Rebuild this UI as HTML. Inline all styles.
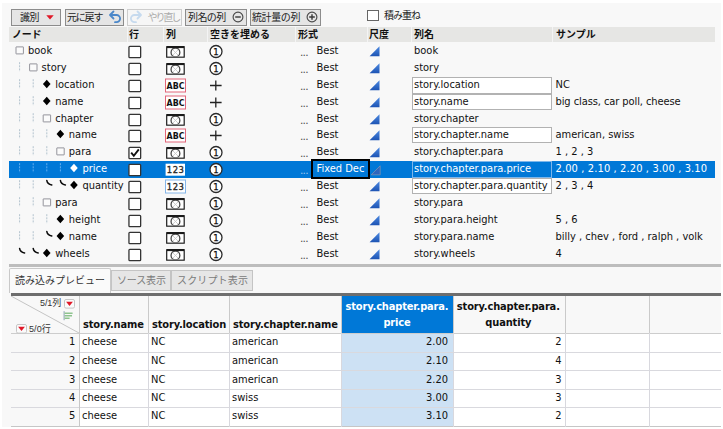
<!DOCTYPE html>
<html lang="ja"><head><meta charset="utf-8"><title>XML import</title>
<style>
html,body{margin:0;padding:0;background:#fff;}
body{width:723px;height:429px;position:relative;overflow:hidden;font-family:'DejaVu Sans Condensed','Liberation Sans','Noto Sans CJK JP',sans-serif;font-size:11px;color:#111;}
#panel{position:absolute;left:2px;top:3px;width:719px;height:424px;background:#f8f8f8;}
.abs{position:absolute;}
.btn{position:absolute;top:9px;height:15px;border:1px solid #8c8c8c;background:#e5e5e5;box-sizing:content-box;}
.jt{position:absolute;font-family:'Liberation Sans','Noto Sans CJK JP',sans-serif;font-size:10px;line-height:15px;white-space:nowrap;color:#222;}
.hd{position:absolute;top:27px;height:15px;line-height:15px;font-family:'Liberation Sans','Noto Sans CJK JP',sans-serif;font-weight:bold;font-size:10px;white-space:nowrap;color:#111;}
.row{position:absolute;left:9px;width:706px;height:17px;}
.t{position:absolute;top:0;height:15px;line-height:15px;white-space:nowrap;}
.gd{position:absolute;top:3px;height:11px;width:0;border-left:1px dotted #a9b4bb;}
.bx{position:absolute;top:4px;width:6px;height:6px;border:1px solid #8a8a8a;border-radius:1px;background:#fbfbfb;}
.dm{position:absolute;top:3px;width:8px;height:9px;}
.cb{position:absolute;left:128px;top:3.5px;width:10.4px;height:9.9px;border:1.3px solid #3a3a3a;background:#fff;border-radius:1.5px;}
.inp{position:absolute;left:412px;top:0px;width:140px;height:16px;border:1px solid #b2b2b2;background:#fff;box-sizing:border-box;}
.sel{background:#0078d7;color:#fff;}
.ico{position:absolute;}
.tab{position:absolute;box-sizing:border-box;}
.vl{position:absolute;width:1px;background:#cfcfcf;}
.hl{position:absolute;height:1px;background:#d9d9de;}
.c{position:absolute;height:18px;line-height:18px;white-space:nowrap;}
.th{position:absolute;font-weight:bold;white-space:nowrap;line-height:16px;letter-spacing:-0.15px;}
</style></head><body>
<svg width="0" height="0" style="position:absolute;left:0;top:0"><defs><clipPath id="vc"><rect x="1.3" y="2.1" width="16.3" height="8.5"/></clipPath><linearGradient id="tg" x1="0" y1="0" x2="0" y2="1"><stop offset="0" stop-color="#4d8ae2"/><stop offset="1" stop-color="#1d54b4"/></linearGradient></defs></svg>
<div id="panel"></div>

<div class="btn" style="left:11px;width:48px;"></div>
<div class="jt" style="left:20px;top:10px;letter-spacing:-0.5px;">識別</div>
<svg class="abs" style="left:46px;top:15px" width="8" height="5" viewBox="0 0 8 5"><path d="M0.3 0.3h7.4L4 4.4z" fill="#e01828"/></svg>
<div class="btn" style="left:65px;width:57px;"></div>
<div class="jt" style="left:67px;top:10px;letter-spacing:-1.2px;">元に戻す</div>
<svg class="abs" style="left:108px;top:10px" width="15" height="14" viewBox="0 0 15 14"><path d="M5.5 1.5L2 5l3.5 3.5M2.2 5h6.3a3.6 3.6 0 0 1 0 7.2H7" fill="none" stroke="#4a87c9" stroke-width="1.8" stroke-linecap="round" stroke-linejoin="round"/></svg>
<div class="btn" style="left:127px;width:53px;border-color:#cdcdcd;background:#f6f6f6;"></div>
<svg class="abs" style="left:128px;top:10px" width="15" height="14" viewBox="0 0 15 14"><path d="M9.5 1.5L13 5 9.5 8.5M12.8 5H6.5a3.6 3.6 0 0 0 0 7.2H8" fill="none" stroke="#c6daee" stroke-width="1.8" stroke-linecap="round" stroke-linejoin="round"/></svg>
<div class="jt" style="left:147.6px;top:10px;letter-spacing:-2.1px;color:#ababab;">やり直し</div>
<div class="btn" style="left:185px;width:60px;"></div>
<div class="jt" style="left:188px;top:10px;letter-spacing:-0.6px;">列名の列</div>
<svg class="abs" style="left:232px;top:11px" width="12" height="12" viewBox="0 0 12 12"><circle cx="6" cy="6" r="4.9" fill="none" stroke="#4a4a4a" stroke-width="1.15"/><path d="M3.2 6h5.6" stroke="#3a3a3a" stroke-width="1.4"/></svg>
<div class="btn" style="left:250px;width:69px;"></div>
<div class="jt" style="left:252px;top:10px;letter-spacing:-0.4px;">統計量の列</div>
<svg class="abs" style="left:306px;top:11px" width="12" height="12" viewBox="0 0 12 12"><circle cx="6" cy="6" r="4.9" fill="none" stroke="#4a4a4a" stroke-width="1.15"/><path d="M3.2 6h5.6M6 3.2v5.6" stroke="#3a3a3a" stroke-width="1.4"/></svg>
<div class="abs" style="left:367px;top:10px;width:10px;height:9px;border:1px solid #666;background:#fff;"></div>
<div class="jt" style="left:384px;top:8px;letter-spacing:-1px;">積み重ね</div>
<div class="abs" style="left:9px;top:27px;width:706px;height:15px;background:#e6e6e4;"></div>
<div class="abs" style="left:127px;top:27px;width:1px;height:15px;background:#f4f4f4;"></div>
<div class="abs" style="left:163px;top:27px;width:1px;height:15px;background:#f4f4f4;"></div>
<div class="abs" style="left:207px;top:27px;width:1px;height:15px;background:#f4f4f4;"></div>
<div class="abs" style="left:295px;top:27px;width:1px;height:15px;background:#f4f4f4;"></div>
<div class="abs" style="left:367px;top:27px;width:1px;height:15px;background:#f4f4f4;"></div>
<div class="abs" style="left:411px;top:27px;width:1px;height:15px;background:#f4f4f4;"></div>
<div class="abs" style="left:552px;top:27px;width:1px;height:15px;background:#f4f4f4;"></div>
<div class="hd" style="left:12px;letter-spacing:-0.2px;">ノード</div>
<div class="hd" style="left:129px;letter-spacing:0.0px;">行</div>
<div class="hd" style="left:166px;letter-spacing:0.0px;">列</div>
<div class="hd" style="left:210px;letter-spacing:0.0px;">空きを埋める</div>
<div class="hd" style="left:298px;letter-spacing:0.0px;">形式</div>
<div class="hd" style="left:369px;letter-spacing:0.0px;">尺度</div>
<div class="hd" style="left:414px;letter-spacing:0.0px;">列名</div>
<div class="hd" style="left:556px;letter-spacing:0.0px;">サンプル</div>
<div class="row" style="top:43px;">
<svg class="ico" style="left:0;top:0" width="100" height="17" viewBox="0 0 100 17"><rect x="7.00" y="3.9" width="7.4" height="7" rx="0.2" fill="#fbfbfb" stroke="#94949c" stroke-width="1"/></svg>
<div class="t" style="left:19.0px;">book</div>
<svg class="ico" style="left:119px;top:2px" width="15" height="14" viewBox="0 0 15 14"><rect x="0.95" y="1.4" width="11.7" height="11.2" rx="0.9" fill="#fff" stroke="#333" stroke-width="1.3"/></svg>
<svg class="ico" style="left:157px;top:3px" width="19" height="12" viewBox="0 0 19 12"><rect x="0.1" y="0" width="18.7" height="11.8" rx="0.4" fill="#1a1a1a"/><rect x="1.3" y="2.1" width="16.3" height="8.5" fill="#fff"/><g clip-path="url(#vc)"><circle cx="9.45" cy="6.4" r="4.4" fill="none" stroke="#484848" stroke-width="1.3"/><path d="M6.9 3.9l5.1 5.1M12 3.9l-5.1 5.1" stroke="#c4c4c4" stroke-width="0.8"/></g></svg>
<svg class="ico" style="left:200px;top:1px" width="14" height="15" viewBox="0 0 14 15"><circle cx="7" cy="7.5" r="6.0" fill="#fff" stroke="#2a2a2a" stroke-width="1.3"/><text x="7" y="10.9" text-anchor="middle" font-family="'DejaVu Sans Condensed','Liberation Sans',sans-serif" font-size="9.5" fill="#111" stroke="#111" stroke-width="0.25">1</text></svg>
<div class="t" style="left:291.4px;top:4px;font-size:7px;font-weight:bold;letter-spacing:0.25px;color:#505050;">...</div>
<div class="t" style="left:307.5px;">Best</div>
<svg class="ico" style="left:360px;top:3px" width="11" height="11" viewBox="0 0 11 11"><path d="M10.5 0.3V10.2H0.6z" fill="url(#tg)"/></svg>
<div class="t" style="left:405px;">book</div>
</div>
<div class="row" style="top:60px;">
<svg class="ico" style="left:0;top:0" width="100" height="17" viewBox="0 0 100 17"><path d="M10.60 2.2V11.6" stroke="#b3c3ce" stroke-width="1" stroke-dasharray="2 1.1" fill="none"/><rect x="20.60" y="3.9" width="7.4" height="7" rx="0.2" fill="#fbfbfb" stroke="#94949c" stroke-width="1"/></svg>
<div class="t" style="left:32.6px;">story</div>
<svg class="ico" style="left:119px;top:2px" width="15" height="14" viewBox="0 0 15 14"><rect x="0.95" y="1.4" width="11.7" height="11.2" rx="0.9" fill="#fff" stroke="#333" stroke-width="1.3"/></svg>
<svg class="ico" style="left:157px;top:3px" width="19" height="12" viewBox="0 0 19 12"><rect x="0.1" y="0" width="18.7" height="11.8" rx="0.4" fill="#1a1a1a"/><rect x="1.3" y="2.1" width="16.3" height="8.5" fill="#fff"/><g clip-path="url(#vc)"><circle cx="9.45" cy="6.4" r="4.4" fill="none" stroke="#484848" stroke-width="1.3"/><path d="M6.9 3.9l5.1 5.1M12 3.9l-5.1 5.1" stroke="#c4c4c4" stroke-width="0.8"/></g></svg>
<svg class="ico" style="left:200px;top:1px" width="14" height="15" viewBox="0 0 14 15"><circle cx="7" cy="7.5" r="6.0" fill="#fff" stroke="#2a2a2a" stroke-width="1.3"/><text x="7" y="10.9" text-anchor="middle" font-family="'DejaVu Sans Condensed','Liberation Sans',sans-serif" font-size="9.5" fill="#111" stroke="#111" stroke-width="0.25">1</text></svg>
<div class="t" style="left:291.4px;top:4px;font-size:7px;font-weight:bold;letter-spacing:0.25px;color:#505050;">...</div>
<div class="t" style="left:307.5px;">Best</div>
<svg class="ico" style="left:360px;top:3px" width="11" height="11" viewBox="0 0 11 11"><path d="M10.5 0.3V10.2H0.6z" fill="url(#tg)"/></svg>
<div class="t" style="left:405px;">story</div>
</div>
<div class="row" style="top:77px;">
<svg class="ico" style="left:0;top:0" width="100" height="17" viewBox="0 0 100 17"><path d="M10.60 2.2V11.6" stroke="#b3c3ce" stroke-width="1" stroke-dasharray="2 1.1" fill="none"/><path d="M24.20 2.2V11.6" stroke="#b3c3ce" stroke-width="1" stroke-dasharray="2 1.1" fill="none"/><path d="M37.75 2.7L41.55 7 37.75 11.3 33.95 7z" fill="#000"/></svg>
<div class="t" style="left:46.2px;">location</div>
<svg class="ico" style="left:119px;top:2px" width="15" height="14" viewBox="0 0 15 14"><rect x="0.95" y="1.4" width="11.7" height="11.2" rx="0.9" fill="#fff" stroke="#333" stroke-width="1.3"/></svg>
<svg class="ico" style="left:156px;top:1px" width="21" height="15" viewBox="0 0 21 15"><rect x="0.5" y="1" width="20" height="13" fill="#fff" stroke="#e2667a" stroke-width="1"/><text x="10.5" y="11.1" text-anchor="middle" font-family="'DejaVu Sans Condensed','Liberation Sans',sans-serif" font-weight="bold" font-size="8.8" fill="#111">ABC</text></svg>
<svg class="ico" style="left:201px;top:3px" width="12" height="11" viewBox="0 0 12 11"><path d="M0 5.5h11.6M5.8 0.4v10.2" stroke="#222" stroke-width="1.3" fill="none"/></svg>
<div class="t" style="left:291.4px;top:4px;font-size:7px;font-weight:bold;letter-spacing:0.25px;color:#505050;">...</div>
<div class="t" style="left:307.5px;">Best</div>
<svg class="ico" style="left:360px;top:3px" width="11" height="11" viewBox="0 0 11 11"><path d="M10.5 0.3V10.2H0.6z" fill="url(#tg)"/></svg>
<div class="inp" style="left:403px;height:17px;"></div>
<div class="t" style="left:405px;">story.location</div>
<div class="t" style="left:546.5px;">NC</div>
</div>
<div class="row" style="top:94px;">
<svg class="ico" style="left:0;top:0" width="100" height="17" viewBox="0 0 100 17"><path d="M10.60 2.2V11.6" stroke="#b3c3ce" stroke-width="1" stroke-dasharray="2 1.1" fill="none"/><path d="M24.20 2.2V11.6" stroke="#b3c3ce" stroke-width="1" stroke-dasharray="2 1.1" fill="none"/><path d="M37.75 2.7L41.55 7 37.75 11.3 33.95 7z" fill="#000"/></svg>
<div class="t" style="left:46.2px;">name</div>
<svg class="ico" style="left:119px;top:2px" width="15" height="14" viewBox="0 0 15 14"><rect x="0.95" y="1.4" width="11.7" height="11.2" rx="0.9" fill="#fff" stroke="#333" stroke-width="1.3"/></svg>
<svg class="ico" style="left:156px;top:1px" width="21" height="15" viewBox="0 0 21 15"><rect x="0.5" y="1" width="20" height="13" fill="#fff" stroke="#e2667a" stroke-width="1"/><text x="10.5" y="11.1" text-anchor="middle" font-family="'DejaVu Sans Condensed','Liberation Sans',sans-serif" font-weight="bold" font-size="8.8" fill="#111">ABC</text></svg>
<svg class="ico" style="left:201px;top:3px" width="12" height="11" viewBox="0 0 12 11"><path d="M0 5.5h11.6M5.8 0.4v10.2" stroke="#222" stroke-width="1.3" fill="none"/></svg>
<div class="t" style="left:291.4px;top:4px;font-size:7px;font-weight:bold;letter-spacing:0.25px;color:#505050;">...</div>
<div class="t" style="left:307.5px;">Best</div>
<svg class="ico" style="left:360px;top:3px" width="11" height="11" viewBox="0 0 11 11"><path d="M10.5 0.3V10.2H0.6z" fill="url(#tg)"/></svg>
<div class="inp" style="left:403px;height:16px;"></div>
<div class="t" style="left:405px;">story.name</div>
<div class="t" style="left:546.5px;letter-spacing:-0.08px;">big class, car poll, cheese</div>
</div>
<div class="row" style="top:111px;">
<svg class="ico" style="left:0;top:0" width="100" height="17" viewBox="0 0 100 17"><path d="M10.60 2.2V11.6" stroke="#b3c3ce" stroke-width="1" stroke-dasharray="2 1.1" fill="none"/><path d="M24.20 2.2V11.6" stroke="#b3c3ce" stroke-width="1" stroke-dasharray="2 1.1" fill="none"/><rect x="34.20" y="3.9" width="7.4" height="7" rx="0.2" fill="#fbfbfb" stroke="#94949c" stroke-width="1"/></svg>
<div class="t" style="left:46.2px;">chapter</div>
<svg class="ico" style="left:119px;top:2px" width="15" height="14" viewBox="0 0 15 14"><rect x="0.95" y="1.4" width="11.7" height="11.2" rx="0.9" fill="#fff" stroke="#333" stroke-width="1.3"/></svg>
<svg class="ico" style="left:157px;top:3px" width="19" height="12" viewBox="0 0 19 12"><rect x="0.1" y="0" width="18.7" height="11.8" rx="0.4" fill="#1a1a1a"/><rect x="1.3" y="2.1" width="16.3" height="8.5" fill="#fff"/><g clip-path="url(#vc)"><circle cx="9.45" cy="6.4" r="4.4" fill="none" stroke="#484848" stroke-width="1.3"/><path d="M6.9 3.9l5.1 5.1M12 3.9l-5.1 5.1" stroke="#c4c4c4" stroke-width="0.8"/></g></svg>
<svg class="ico" style="left:200px;top:1px" width="14" height="15" viewBox="0 0 14 15"><circle cx="7" cy="7.5" r="6.0" fill="#fff" stroke="#2a2a2a" stroke-width="1.3"/><text x="7" y="10.9" text-anchor="middle" font-family="'DejaVu Sans Condensed','Liberation Sans',sans-serif" font-size="9.5" fill="#111" stroke="#111" stroke-width="0.25">1</text></svg>
<div class="t" style="left:291.4px;top:4px;font-size:7px;font-weight:bold;letter-spacing:0.25px;color:#505050;">...</div>
<div class="t" style="left:307.5px;">Best</div>
<svg class="ico" style="left:360px;top:3px" width="11" height="11" viewBox="0 0 11 11"><path d="M10.5 0.3V10.2H0.6z" fill="url(#tg)"/></svg>
<div class="t" style="left:405px;">story.chapter</div>
</div>
<div class="row" style="top:127px;">
<svg class="ico" style="left:0;top:0" width="100" height="17" viewBox="0 0 100 17"><path d="M10.60 2.2V11.6" stroke="#b3c3ce" stroke-width="1" stroke-dasharray="2 1.1" fill="none"/><path d="M24.20 2.2V11.6" stroke="#b3c3ce" stroke-width="1" stroke-dasharray="2 1.1" fill="none"/><path d="M37.80 2.2V11.6" stroke="#b3c3ce" stroke-width="1" stroke-dasharray="2 1.1" fill="none"/><path d="M51.35 2.7L55.15 7 51.35 11.3 47.55 7z" fill="#000"/></svg>
<div class="t" style="left:59.8px;">name</div>
<svg class="ico" style="left:119px;top:2px" width="15" height="14" viewBox="0 0 15 14"><rect x="0.95" y="1.4" width="11.7" height="11.2" rx="0.9" fill="#fff" stroke="#333" stroke-width="1.3"/></svg>
<svg class="ico" style="left:156px;top:1px" width="21" height="15" viewBox="0 0 21 15"><rect x="0.5" y="1" width="20" height="13" fill="#fff" stroke="#e2667a" stroke-width="1"/><text x="10.5" y="11.1" text-anchor="middle" font-family="'DejaVu Sans Condensed','Liberation Sans',sans-serif" font-weight="bold" font-size="8.8" fill="#111">ABC</text></svg>
<svg class="ico" style="left:201px;top:3px" width="12" height="11" viewBox="0 0 12 11"><path d="M0 5.5h11.6M5.8 0.4v10.2" stroke="#222" stroke-width="1.3" fill="none"/></svg>
<div class="t" style="left:291.4px;top:4px;font-size:7px;font-weight:bold;letter-spacing:0.25px;color:#505050;">...</div>
<div class="t" style="left:307.5px;">Best</div>
<svg class="ico" style="left:360px;top:3px" width="11" height="11" viewBox="0 0 11 11"><path d="M10.5 0.3V10.2H0.6z" fill="url(#tg)"/></svg>
<div class="inp" style="left:403px;height:16px;"></div>
<div class="t" style="left:405px;">story.chapter.name</div>
<div class="t" style="left:546.5px;">american, swiss</div>
</div>
<div class="row" style="top:144px;">
<svg class="ico" style="left:0;top:0" width="100" height="17" viewBox="0 0 100 17"><path d="M10.60 2.2V11.6" stroke="#b3c3ce" stroke-width="1" stroke-dasharray="2 1.1" fill="none"/><path d="M24.20 2.2V11.6" stroke="#b3c3ce" stroke-width="1" stroke-dasharray="2 1.1" fill="none"/><path d="M37.80 2.2V11.6" stroke="#b3c3ce" stroke-width="1" stroke-dasharray="2 1.1" fill="none"/><rect x="47.80" y="3.9" width="7.4" height="7" rx="0.2" fill="#fbfbfb" stroke="#94949c" stroke-width="1"/></svg>
<div class="t" style="left:59.8px;">para</div>
<svg class="ico" style="left:119px;top:2px" width="15" height="14" viewBox="0 0 15 14"><rect x="0.95" y="1.4" width="11.7" height="11.2" rx="0.9" fill="#fff" stroke="#333" stroke-width="1.3"/><path d="M3.2 6.6l2.6 3.2L10.8 3.4" fill="none" stroke="#111" stroke-width="1.9"/></svg>
<svg class="ico" style="left:157px;top:3px" width="19" height="12" viewBox="0 0 19 12"><rect x="0.1" y="0" width="18.7" height="11.8" rx="0.4" fill="#1a1a1a"/><rect x="1.3" y="2.1" width="16.3" height="8.5" fill="#fff"/><g clip-path="url(#vc)"><circle cx="9.45" cy="6.4" r="4.4" fill="none" stroke="#484848" stroke-width="1.3"/><path d="M6.9 3.9l5.1 5.1M12 3.9l-5.1 5.1" stroke="#c4c4c4" stroke-width="0.8"/></g></svg>
<svg class="ico" style="left:200px;top:1px" width="14" height="15" viewBox="0 0 14 15"><circle cx="7" cy="7.5" r="6.0" fill="#fff" stroke="#2a2a2a" stroke-width="1.3"/><text x="7" y="10.9" text-anchor="middle" font-family="'DejaVu Sans Condensed','Liberation Sans',sans-serif" font-size="9.5" fill="#111" stroke="#111" stroke-width="0.25">1</text></svg>
<div class="t" style="left:291.4px;top:4px;font-size:7px;font-weight:bold;letter-spacing:0.25px;color:#505050;">...</div>
<div class="t" style="left:307.5px;">Best</div>
<svg class="ico" style="left:360px;top:3px" width="11" height="11" viewBox="0 0 11 11"><path d="M10.5 0.3V10.2H0.6z" fill="url(#tg)"/></svg>
<div class="t" style="left:405px;">story.chapter.para</div>
<div class="t" style="left:546.5px;">1 , 2 , 3</div>
</div>
<div class="row sel" style="top:161px;">
<svg class="ico" style="left:0;top:0" width="100" height="17" viewBox="0 0 100 17"><path d="M10.60 2.2V11.6" stroke="#63aef0" stroke-width="1" stroke-dasharray="2 1.1" fill="none"/><path d="M24.20 2.2V11.6" stroke="#63aef0" stroke-width="1" stroke-dasharray="2 1.1" fill="none"/><path d="M37.80 2.2V11.6" stroke="#63aef0" stroke-width="1" stroke-dasharray="2 1.1" fill="none"/><path d="M51.40 2.2V11.6" stroke="#63aef0" stroke-width="1" stroke-dasharray="2 1.1" fill="none"/><path d="M64.95 2.7L68.75 7 64.95 11.3 61.15 7z" fill="#fff"/></svg>
<div class="t" style="left:73.4px;">price</div>
<svg class="ico" style="left:119px;top:2px" width="15" height="14" viewBox="0 0 15 14"><rect x="0.95" y="1.4" width="11.7" height="11.2" rx="0.9" fill="#fff" stroke="#333" stroke-width="1.3"/></svg>
<svg class="ico" style="left:156px;top:1px" width="21" height="15" viewBox="0 0 21 15"><rect x="0.6" y="1.7" width="19.4" height="12" fill="#fff"/><text x="10.6" y="11.3" text-anchor="middle" font-family="'DejaVu Sans Condensed','Liberation Sans',sans-serif" font-size="9.4" letter-spacing="0.5" fill="#2a2a2a" stroke="#2a2a2a" stroke-width="0.35">123</text></svg>
<svg class="ico" style="left:200px;top:1px" width="14" height="15" viewBox="0 0 14 15"><circle cx="7" cy="7.5" r="6.0" fill="#fff" stroke="#2a2a2a" stroke-width="1.3"/><text x="7" y="10.9" text-anchor="middle" font-family="'DejaVu Sans Condensed','Liberation Sans',sans-serif" font-size="9.5" fill="#111" stroke="#111" stroke-width="0.25">1</text></svg>
<div class="t" style="left:291.4px;top:4px;font-size:7px;font-weight:bold;letter-spacing:0.25px;color:#9cc4ee;">...</div>
<div class="t" style="left:307.5px;">Fixed Dec</div>
<svg class="ico" style="left:361px;top:3px" width="11" height="12" viewBox="0 0 11 12"><path d="M10.2 1.8V10.8H1.2z" fill="#2f66bd" stroke="#8797ad" stroke-width="0.7"/></svg>
<div class="inp" style="left:403px;height:17px;background:transparent;border-color:#7db6ea;"></div>
<div class="t" style="left:405px;">story.chapter.para.price</div>
<div class="t" style="left:546.5px;letter-spacing:0.12px;">2.00 , 2.10 , 2.20 , 3.00 , 3.10</div>
</div>
<div class="row" style="top:178px;">
<svg class="ico" style="left:0;top:0" width="100" height="17" viewBox="0 0 100 17"><path d="M10.60 2.2V11.6" stroke="#b3c3ce" stroke-width="1" stroke-dasharray="2 1.1" fill="none"/><path d="M24.20 2.2V11.6" stroke="#b3c3ce" stroke-width="1" stroke-dasharray="2 1.1" fill="none"/><path d="M37.80 2.4Q38.30 6.2 42.80 6.9" fill="none" stroke="#0a0a0a" stroke-width="1.5" stroke-linecap="round"/><path d="M51.40 2.4Q51.90 6.2 56.40 6.9" fill="none" stroke="#0a0a0a" stroke-width="1.5" stroke-linecap="round"/><path d="M64.95 2.7L68.75 7 64.95 11.3 61.15 7z" fill="#000"/></svg>
<div class="t" style="left:73.4px;">quantity</div>
<svg class="ico" style="left:119px;top:2px" width="15" height="14" viewBox="0 0 15 14"><rect x="0.95" y="1.4" width="11.7" height="11.2" rx="0.9" fill="#fff" stroke="#333" stroke-width="1.3"/></svg>
<svg class="ico" style="left:156px;top:1px" width="21" height="15" viewBox="0 0 21 15"><rect x="0.5" y="1" width="20" height="13" fill="#fff" stroke="#86b6e8" stroke-width="1"/><text x="10.6" y="11.3" text-anchor="middle" font-family="'DejaVu Sans Condensed','Liberation Sans',sans-serif" font-size="9.4" letter-spacing="0.5" fill="#2a2a2a" stroke="#2a2a2a" stroke-width="0.35">123</text></svg>
<svg class="ico" style="left:200px;top:1px" width="14" height="15" viewBox="0 0 14 15"><circle cx="7" cy="7.5" r="6.0" fill="#fff" stroke="#2a2a2a" stroke-width="1.3"/><text x="7" y="10.9" text-anchor="middle" font-family="'DejaVu Sans Condensed','Liberation Sans',sans-serif" font-size="9.5" fill="#111" stroke="#111" stroke-width="0.25">1</text></svg>
<div class="t" style="left:291.4px;top:4px;font-size:7px;font-weight:bold;letter-spacing:0.25px;color:#505050;">...</div>
<div class="t" style="left:307.5px;">Best</div>
<svg class="ico" style="left:360px;top:3px" width="11" height="11" viewBox="0 0 11 11"><path d="M10.5 0.3V10.2H0.6z" fill="url(#tg)"/></svg>
<div class="inp" style="left:403px;height:16px;"></div>
<div class="t" style="left:405px;">story.chapter.para.quantity</div>
<div class="t" style="left:546.5px;">2 , 3 , 4</div>
</div>
<div class="row" style="top:195px;">
<svg class="ico" style="left:0;top:0" width="100" height="17" viewBox="0 0 100 17"><path d="M10.60 2.2V11.6" stroke="#b3c3ce" stroke-width="1" stroke-dasharray="2 1.1" fill="none"/><path d="M24.20 2.2V11.6" stroke="#b3c3ce" stroke-width="1" stroke-dasharray="2 1.1" fill="none"/><rect x="34.20" y="3.9" width="7.4" height="7" rx="0.2" fill="#fbfbfb" stroke="#94949c" stroke-width="1"/></svg>
<div class="t" style="left:46.2px;">para</div>
<svg class="ico" style="left:119px;top:2px" width="15" height="14" viewBox="0 0 15 14"><rect x="0.95" y="1.4" width="11.7" height="11.2" rx="0.9" fill="#fff" stroke="#333" stroke-width="1.3"/></svg>
<svg class="ico" style="left:157px;top:3px" width="19" height="12" viewBox="0 0 19 12"><rect x="0.1" y="0" width="18.7" height="11.8" rx="0.4" fill="#1a1a1a"/><rect x="1.3" y="2.1" width="16.3" height="8.5" fill="#fff"/><g clip-path="url(#vc)"><circle cx="9.45" cy="6.4" r="4.4" fill="none" stroke="#484848" stroke-width="1.3"/><path d="M6.9 3.9l5.1 5.1M12 3.9l-5.1 5.1" stroke="#c4c4c4" stroke-width="0.8"/></g></svg>
<svg class="ico" style="left:200px;top:1px" width="14" height="15" viewBox="0 0 14 15"><circle cx="7" cy="7.5" r="6.0" fill="#fff" stroke="#2a2a2a" stroke-width="1.3"/><text x="7" y="10.9" text-anchor="middle" font-family="'DejaVu Sans Condensed','Liberation Sans',sans-serif" font-size="9.5" fill="#111" stroke="#111" stroke-width="0.25">1</text></svg>
<div class="t" style="left:291.4px;top:4px;font-size:7px;font-weight:bold;letter-spacing:0.25px;color:#505050;">...</div>
<div class="t" style="left:307.5px;">Best</div>
<svg class="ico" style="left:360px;top:3px" width="11" height="11" viewBox="0 0 11 11"><path d="M10.5 0.3V10.2H0.6z" fill="url(#tg)"/></svg>
<div class="t" style="left:405px;">story.para</div>
</div>
<div class="row" style="top:212px;">
<svg class="ico" style="left:0;top:0" width="100" height="17" viewBox="0 0 100 17"><path d="M10.60 2.2V11.6" stroke="#b3c3ce" stroke-width="1" stroke-dasharray="2 1.1" fill="none"/><path d="M24.20 2.2V11.6" stroke="#b3c3ce" stroke-width="1" stroke-dasharray="2 1.1" fill="none"/><path d="M37.80 2.2V11.6" stroke="#b3c3ce" stroke-width="1" stroke-dasharray="2 1.1" fill="none"/><path d="M51.35 2.7L55.15 7 51.35 11.3 47.55 7z" fill="#000"/></svg>
<div class="t" style="left:59.8px;">height</div>
<svg class="ico" style="left:119px;top:2px" width="15" height="14" viewBox="0 0 15 14"><rect x="0.95" y="1.4" width="11.7" height="11.2" rx="0.9" fill="#fff" stroke="#333" stroke-width="1.3"/></svg>
<svg class="ico" style="left:157px;top:3px" width="19" height="12" viewBox="0 0 19 12"><rect x="0.1" y="0" width="18.7" height="11.8" rx="0.4" fill="#1a1a1a"/><rect x="1.3" y="2.1" width="16.3" height="8.5" fill="#fff"/><g clip-path="url(#vc)"><circle cx="9.45" cy="6.4" r="4.4" fill="none" stroke="#484848" stroke-width="1.3"/><path d="M6.9 3.9l5.1 5.1M12 3.9l-5.1 5.1" stroke="#c4c4c4" stroke-width="0.8"/></g></svg>
<svg class="ico" style="left:200px;top:1px" width="14" height="15" viewBox="0 0 14 15"><circle cx="7" cy="7.5" r="6.0" fill="#fff" stroke="#2a2a2a" stroke-width="1.3"/><text x="7" y="10.9" text-anchor="middle" font-family="'DejaVu Sans Condensed','Liberation Sans',sans-serif" font-size="9.5" fill="#111" stroke="#111" stroke-width="0.25">1</text></svg>
<div class="t" style="left:291.4px;top:4px;font-size:7px;font-weight:bold;letter-spacing:0.25px;color:#505050;">...</div>
<div class="t" style="left:307.5px;">Best</div>
<svg class="ico" style="left:360px;top:3px" width="11" height="11" viewBox="0 0 11 11"><path d="M10.5 0.3V10.2H0.6z" fill="url(#tg)"/></svg>
<div class="t" style="left:405px;">story.para.height</div>
<div class="t" style="left:546.5px;">5 , 6</div>
</div>
<div class="row" style="top:229px;">
<svg class="ico" style="left:0;top:0" width="100" height="17" viewBox="0 0 100 17"><path d="M10.60 2.2V11.6" stroke="#b3c3ce" stroke-width="1" stroke-dasharray="2 1.1" fill="none"/><path d="M24.20 2.2V11.6" stroke="#b3c3ce" stroke-width="1" stroke-dasharray="2 1.1" fill="none"/><path d="M37.80 2.4Q38.30 6.2 42.80 6.9" fill="none" stroke="#0a0a0a" stroke-width="1.5" stroke-linecap="round"/><path d="M51.35 2.7L55.15 7 51.35 11.3 47.55 7z" fill="#000"/></svg>
<div class="t" style="left:59.8px;">name</div>
<svg class="ico" style="left:119px;top:2px" width="15" height="14" viewBox="0 0 15 14"><rect x="0.95" y="1.4" width="11.7" height="11.2" rx="0.9" fill="#fff" stroke="#333" stroke-width="1.3"/></svg>
<svg class="ico" style="left:157px;top:3px" width="19" height="12" viewBox="0 0 19 12"><rect x="0.1" y="0" width="18.7" height="11.8" rx="0.4" fill="#1a1a1a"/><rect x="1.3" y="2.1" width="16.3" height="8.5" fill="#fff"/><g clip-path="url(#vc)"><circle cx="9.45" cy="6.4" r="4.4" fill="none" stroke="#484848" stroke-width="1.3"/><path d="M6.9 3.9l5.1 5.1M12 3.9l-5.1 5.1" stroke="#c4c4c4" stroke-width="0.8"/></g></svg>
<svg class="ico" style="left:200px;top:1px" width="14" height="15" viewBox="0 0 14 15"><circle cx="7" cy="7.5" r="6.0" fill="#fff" stroke="#2a2a2a" stroke-width="1.3"/><text x="7" y="10.9" text-anchor="middle" font-family="'DejaVu Sans Condensed','Liberation Sans',sans-serif" font-size="9.5" fill="#111" stroke="#111" stroke-width="0.25">1</text></svg>
<div class="t" style="left:291.4px;top:4px;font-size:7px;font-weight:bold;letter-spacing:0.25px;color:#505050;">...</div>
<div class="t" style="left:307.5px;">Best</div>
<svg class="ico" style="left:360px;top:3px" width="11" height="11" viewBox="0 0 11 11"><path d="M10.5 0.3V10.2H0.6z" fill="url(#tg)"/></svg>
<div class="t" style="left:405px;">story.para.name</div>
<div class="t" style="left:546.5px;">billy , chev , ford , ralph , volk</div>
</div>
<div class="row" style="top:246px;">
<svg class="ico" style="left:0;top:0" width="100" height="17" viewBox="0 0 100 17"><path d="M10.60 2.4Q11.10 6.2 15.60 6.9" fill="none" stroke="#0a0a0a" stroke-width="1.5" stroke-linecap="round"/><path d="M24.20 2.4Q24.70 6.2 29.20 6.9" fill="none" stroke="#0a0a0a" stroke-width="1.5" stroke-linecap="round"/><path d="M37.75 2.7L41.55 7 37.75 11.3 33.95 7z" fill="#000"/></svg>
<div class="t" style="left:46.2px;">wheels</div>
<svg class="ico" style="left:119px;top:2px" width="15" height="14" viewBox="0 0 15 14"><rect x="0.95" y="1.4" width="11.7" height="11.2" rx="0.9" fill="#fff" stroke="#333" stroke-width="1.3"/></svg>
<svg class="ico" style="left:157px;top:3px" width="19" height="12" viewBox="0 0 19 12"><rect x="0.1" y="0" width="18.7" height="11.8" rx="0.4" fill="#1a1a1a"/><rect x="1.3" y="2.1" width="16.3" height="8.5" fill="#fff"/><g clip-path="url(#vc)"><circle cx="9.45" cy="6.4" r="4.4" fill="none" stroke="#484848" stroke-width="1.3"/><path d="M6.9 3.9l5.1 5.1M12 3.9l-5.1 5.1" stroke="#c4c4c4" stroke-width="0.8"/></g></svg>
<svg class="ico" style="left:200px;top:1px" width="14" height="15" viewBox="0 0 14 15"><circle cx="7" cy="7.5" r="6.0" fill="#fff" stroke="#2a2a2a" stroke-width="1.3"/><text x="7" y="10.9" text-anchor="middle" font-family="'DejaVu Sans Condensed','Liberation Sans',sans-serif" font-size="9.5" fill="#111" stroke="#111" stroke-width="0.25">1</text></svg>
<div class="t" style="left:291.4px;top:4px;font-size:7px;font-weight:bold;letter-spacing:0.25px;color:#505050;">...</div>
<div class="t" style="left:307.5px;">Best</div>
<svg class="ico" style="left:360px;top:3px" width="11" height="11" viewBox="0 0 11 11"><path d="M10.5 0.3V10.2H0.6z" fill="url(#tg)"/></svg>
<div class="t" style="left:405px;">story.wheels</div>
<div class="t" style="left:546.5px;">4</div>
</div>
<div class="abs" style="left:311px;top:159px;width:55px;height:16px;border:2px solid #000;"></div>
<div class="abs" style="left:9px;top:264px;width:712px;height:3px;background:#bdbdbd;"></div>
<div class="abs" style="left:9px;top:293px;width:712px;height:3px;background:#6e6e6e;"></div>
<div class="tab" style="left:9px;top:268px;width:102px;height:25px;border:1px solid #c9c9c9;border-bottom:none;background:#fafafa;border-radius:2px 2px 0 0;"></div>
<div class="abs" style="left:9px;top:293px;width:2px;height:3px;background:#f8f8f8;"></div>
<div class="jt" style="left:15px;top:273px;font-size:10px;letter-spacing:0px;color:#333;">読み込みプレビュー</div>
<div class="tab" style="left:111px;top:270px;width:60px;height:21px;border:1px solid #c4c4c4;background:#e6e6e6;"></div>
<div class="jt" style="left:117px;top:273px;font-size:10px;letter-spacing:-0.15px;color:#7a7a7a;">ソース表示</div>
<div class="tab" style="left:171px;top:270px;width:82px;height:21px;border:1px solid #c4c4c4;background:#e6e6e6;"></div>
<div class="jt" style="left:177px;top:273px;font-size:10px;letter-spacing:0.15px;color:#7a7a7a;">スクリプト表示</div>
<div class="abs" style="left:11px;top:296px;width:710px;height:133px;background:#fff;"></div>
<div class="abs" style="left:11px;top:296px;width:68px;height:131px;background:#f8f8f8;"></div>
<div class="abs" style="left:11px;top:296px;width:710px;height:37px;background:#f8f8f8;"></div>
<div class="abs" style="left:342px;top:296px;width:111px;height:37px;background:#0078d7;"></div>
<div class="abs" style="left:342px;top:333px;width:111px;height:94px;background:#cde1f4;"></div>
<div class="hl" style="left:11px;top:333px;width:710px;background:#cdcdcd;"></div>
<div class="hl" style="left:11px;top:352px;width:710px;"></div>
<div class="hl" style="left:11px;top:370px;width:710px;"></div>
<div class="hl" style="left:11px;top:389px;width:710px;"></div>
<div class="hl" style="left:11px;top:407px;width:710px;"></div>
<div class="hl" style="left:11px;top:426px;width:710px;background:#c6c6c6;"></div>
<div class="vl" style="left:79px;top:296px;height:37px;background:#cacaca;"></div>
<div class="vl" style="left:79px;top:333px;height:94px;background:#c8c8c8;"></div>
<div class="vl" style="left:148px;top:296px;height:37px;background:#cacaca;"></div>
<div class="vl" style="left:148px;top:333px;height:94px;background:#d8d8de;"></div>
<div class="vl" style="left:229px;top:296px;height:37px;background:#cacaca;"></div>
<div class="vl" style="left:229px;top:333px;height:94px;background:#d8d8de;"></div>
<div class="vl" style="left:341px;top:296px;height:37px;background:#cacaca;"></div>
<div class="vl" style="left:341px;top:333px;height:94px;background:#d8d8de;"></div>
<div class="vl" style="left:453px;top:296px;height:37px;background:#cacaca;"></div>
<div class="vl" style="left:453px;top:333px;height:94px;background:#d8d8de;"></div>
<div class="vl" style="left:565px;top:296px;height:37px;background:#cacaca;"></div>
<div class="vl" style="left:565px;top:333px;height:94px;background:#d8d8de;"></div>
<div class="vl" style="left:649px;top:296px;height:37px;background:#cacaca;"></div>
<div class="vl" style="left:649px;top:333px;height:94px;background:#d8d8de;"></div>
<svg class="abs" style="left:11px;top:296px" width="68" height="37" viewBox="0 0 68 37"><path d="M0 0L68 37" stroke="#c4c4c4" stroke-width="1" fill="none"/></svg>
<div class="jt" style="left:40px;top:297px;font-size:9px;line-height:12px;letter-spacing:-0.1px;color:#333;">5/1列</div>
<div class="jt" style="left:29px;top:323px;font-size:9px;line-height:12px;letter-spacing:0.1px;color:#333;">5/0行</div>
<svg class="abs" style="left:64px;top:299px" width="11" height="10" viewBox="0 0 11 10"><rect x="0.5" y="0.5" width="10" height="8.6" rx="1.5" fill="#fbfbfb" stroke="#c6c6c6"/><path d="M2.1 2.8h6.8L5.5 7z" fill="#e01828"/></svg>
<svg class="abs" style="left:16px;top:324px" width="11" height="10" viewBox="0 0 11 10"><rect x="0.5" y="0.5" width="10" height="8.6" rx="1.5" fill="#fbfbfb" stroke="#c6c6c6"/><path d="M2.1 2.8h6.8L5.5 7z" fill="#e01828"/></svg>
<svg class="abs" style="left:63px;top:311px" width="11" height="10" viewBox="0 0 11 10"><path d="M1.1 0.2v9" stroke="#8ca0b4" stroke-width="1"/><path d="M1.6 2.2h8M1.6 4.7h7.4M1.6 7.2h5" stroke="#8ec48e" stroke-width="1.5"/></svg>
<div class="th" style="left:83px;top:317px;">story.name</div>
<div class="th" style="left:152px;top:317px;">story.location</div>
<div class="th" style="left:233px;top:317px;">story.chapter.name</div>
<div class="th" style="left:341px;top:299px;width:112px;text-align:center;color:#fff;">story.chapter.para.<br>price</div>
<div class="th" style="left:452.3px;top:299px;width:112px;text-align:center;">story.chapter.para.<br>quantity</div>
<div class="c" style="left:11px;top:333px;width:64.4px;text-align:right;">1</div>
<div class="c" style="left:82px;top:333px;">cheese</div>
<div class="c" style="left:151px;top:333px;">NC</div>
<div class="c" style="left:232px;top:333px;">american</div>
<div class="c" style="left:342px;top:333px;width:106px;text-align:right;">2.00</div>
<div class="c" style="left:455px;top:333px;width:106.5px;text-align:right;">2</div>
<div class="c" style="left:11px;top:352px;width:64.4px;text-align:right;">2</div>
<div class="c" style="left:82px;top:352px;">cheese</div>
<div class="c" style="left:151px;top:352px;">NC</div>
<div class="c" style="left:232px;top:352px;">american</div>
<div class="c" style="left:342px;top:352px;width:106px;text-align:right;">2.10</div>
<div class="c" style="left:455px;top:352px;width:106.5px;text-align:right;">4</div>
<div class="c" style="left:11px;top:371px;width:64.4px;text-align:right;">3</div>
<div class="c" style="left:82px;top:371px;">cheese</div>
<div class="c" style="left:151px;top:371px;">NC</div>
<div class="c" style="left:232px;top:371px;">american</div>
<div class="c" style="left:342px;top:371px;width:106px;text-align:right;">2.20</div>
<div class="c" style="left:455px;top:371px;width:106.5px;text-align:right;">3</div>
<div class="c" style="left:11px;top:389px;width:64.4px;text-align:right;">4</div>
<div class="c" style="left:82px;top:389px;">cheese</div>
<div class="c" style="left:151px;top:389px;">NC</div>
<div class="c" style="left:232px;top:389px;">swiss</div>
<div class="c" style="left:342px;top:389px;width:106px;text-align:right;">3.00</div>
<div class="c" style="left:455px;top:389px;width:106.5px;text-align:right;">3</div>
<div class="c" style="left:11px;top:407px;width:64.4px;text-align:right;">5</div>
<div class="c" style="left:82px;top:407px;">cheese</div>
<div class="c" style="left:151px;top:407px;">NC</div>
<div class="c" style="left:232px;top:407px;">swiss</div>
<div class="c" style="left:342px;top:407px;width:106px;text-align:right;">3.10</div>
<div class="c" style="left:455px;top:407px;width:106.5px;text-align:right;">2</div>
</body></html>
